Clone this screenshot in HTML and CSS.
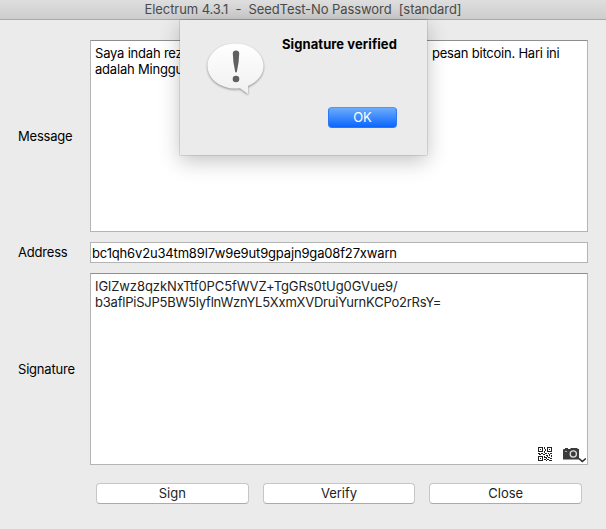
FILE: index.html
```html
<!DOCTYPE html>
<html lang="id">
<head>
<meta charset="utf-8">
<title>Electrum</title>
<link rel="stylesheet" href="styles.css">
</head>
<body>
<div class="window">
  <header class="titlebar"><span class="title">Electrum 4.3.1&nbsp; -&nbsp; SeedTest-No Password&nbsp; [standard]</span></header>
  <main class="form">
    <label class="label">Message</label>
    <div class="area message">
      <div class="line split"><span class="msg-a">Saya indah rez</span><span class="msg-b">pesan bitcoin. Hari ini</span></div>
      <div class="line msg-c">adalah Minggu</div>
    </div>
    <label class="label label-address">Address</label>
    <div class="field"><span class="addr">bc1qh6v2u34tm89l7w9e9ut9gpajn9ga08f27xwarn</span></div>
    <label class="label">Signature</label>
    <div class="area signature">
      <div class="line"><span class="sig-a">IGlZwz8qzkNxTtf0PC5fWVZ+TgGRs0tUg0GVue9/</span></div>
      <div class="line"><span class="sig-b">b3aflPiSJP5BW5lyflnWznYL5XxmXVDruiYurnKCPo2rRsY=</span></div>
      <div class="tools">
        <svg width="14" height="14" viewBox="0 0 14 14" shape-rendering="crispEdges">
          <path fill="none" stroke="#222" d="M.5.5h4v4h-4zM9.500.5h4v4h-4zM.5 9.500h4v4h-4z"/>
          <path fill="#222" d="M2 2h1v1h-1zM11 2h1v1h-1zM2 11h1v1h-1zM6 0h1v2h-1zM7 2h1v2h-1zM6 4h1v2h-1zM0 6h2v1h-2zM3 6h2v1h-2zM1 7h2v1h-2zM5 7h2v1h-2zM7 6h2v1h-2zM10 6h1v1h-1zM12 6h2v1h-2zM8 8h2v1h-2zM11 7h1v2h-1zM13 8h1v2h-1zM6 9h1v2h-1zM7 10h2v1h-2zM9 9h1v1h-1zM10 10h2v1h-2zM12 11h2v1h-2zM6 12h2v1h-2zM8 11h1v1h-1zM9 12h2v1h-2zM8 13h1v1h-1zM11 13h3v1h-3z"/>
        </svg>
        <svg width="24" height="16" viewBox="0 0 24 16">
          <path fill="#3b3b3b" d="M2 1h3v1h2l1-1h6l1 1h1v10q0 .6-.6.600H.6Q0 12.600 0 12V3q0-1 1-1h1z"/>
          <circle cx="10.300" cy="7" r="3.100" fill="none" stroke="#ddd" stroke-width="1.300"/>
          <path stroke="#aaa" d="M2 4.500h2"/>
          <path fill="none" stroke="#222" stroke-width="1.500" d="M16 11.500l3.300 3 3.500-3"/>
        </svg>
      </div>
    </div>
  </main>
  <footer class="buttons">
    <button class="btn">Sign</button>
    <button class="btn">Verify</button>
    <button class="btn">Close</button>
  </footer>
  <section class="dialog">
    <svg class="bubble" width="62" height="58" viewBox="0 0 62 58">
      <defs><linearGradient id="g" x2="0" y2="1"><stop stop-color="#fff"/><stop offset="1" stop-color="#f0f0f0"/></linearGradient></defs>
      <path class="balloon" fill="url(#g)" d="M30.500 3.500C46 3.500 58.500 13.500 58.500 26C58.500 34.500 52.500 42 43 46V54L35 48.300Q32.500 48.600 30.500 48.600C15 48.600 2.500 38.500 2.500 26C2.500 13.500 15 3.500 30.500 3.500z"/>
      <path fill="#606060" d="M27.800 13.500Q27.800 10.500 31 10.500Q34.200 10.500 34.200 13.500Q34.200 22 31.800 32.300H30.300Q27.800 22 27.800 13.500z"/>
      <circle cx="31" cy="39" r="3.300" fill="#606060"/>
    </svg>
    <div class="dialog-body">
      <strong class="dialog-text">Signature verified</strong>
      <button class="ok">OK</button>
    </div>
  </section>
</div>
</body>
</html>
```

FILE: styles.css
```css
* { box-sizing: border-box; }
body { margin: 0; font: 13px/16px Inter, "Liberation Sans", sans-serif; color: #000; }
.window { position: relative; width: 606px; height: 529px; background: #ebebeb; overflow: hidden; }
.titlebar { height: 20px; background: linear-gradient(#dedede, #cdcdcd); border-bottom: 1px solid #a9a9a9; text-align: center; line-height: 19px; color: #4b4b4b; white-space: nowrap; }
.title { letter-spacing: -.08px; }
.form { display: grid; grid-template-columns: 72px 498px; grid-template-rows: 192px 21px 192px; row-gap: 10px; align-items: center; padding: 20px 18px 0; }
.label { letter-spacing: -.2px; }
.label-address { padding-bottom: 2px; }
.area { position: relative; height: 192px; background: #fff; border: 1px solid #b4b4b4; border-top-color: #8e8e8e; padding: 4px; }
.line { height: 16px; white-space: nowrap; }
.split { display: flex; }
.msg-a { width: 337px; letter-spacing: -.2px; }
.msg-b { letter-spacing: -.22px; }
.msg-c { letter-spacing: -.2px; }
.field { height: 21px; background: #fff; border: 1px solid #b4b4b4; padding: 2px 1px 0; line-height: 16px; }
.addr { letter-spacing: -.16px; }
.signature { color: #222; }
.sig-a { letter-spacing: -.07px; }
.sig-b { letter-spacing: -.22px; }
.tools { position: absolute; right: 0; bottom: 1px; display: flex; align-items: flex-start; gap: 11px; }
.buttons { display: flex; gap: 14px; padding: 18px 24px 0 96px; }
.btn { flex: 1; height: 21px; padding: 0; background: #fff; border: 1px solid #c6c6c6; border-bottom-color: #ababab; border-radius: 4px; font: inherit; line-height: 19px; color: #222; }
.dialog { position: absolute; left: 180px; top: 20px; width: 247px; height: 135px; display: flex; background: #ebebeb; box-shadow: 0 0 1px rgba(0,0,0,.6), 0 6px 20px rgba(0,0,0,.24); padding: 16px 30px 0 25px; }
.bubble { flex: none; margin-top: 4px; }
.balloon { filter: drop-shadow(0 1px 1px rgba(0,0,0,.4)); }
.dialog-body { display: flex; flex-direction: column; flex: 1; margin-left: 15px; }
.dialog-text { white-space: nowrap; font-weight: 700; letter-spacing: .08px; }
.ok { align-self: flex-end; width: 69px; height: 21px; margin-top: 55px; padding: 0; border: 1px solid #2a78f5; border-top-color: #4f97fa; border-radius: 4px; background: linear-gradient(#6bacfb, #0b66fe); color: #fff; font: inherit; line-height: 19px; }
```
